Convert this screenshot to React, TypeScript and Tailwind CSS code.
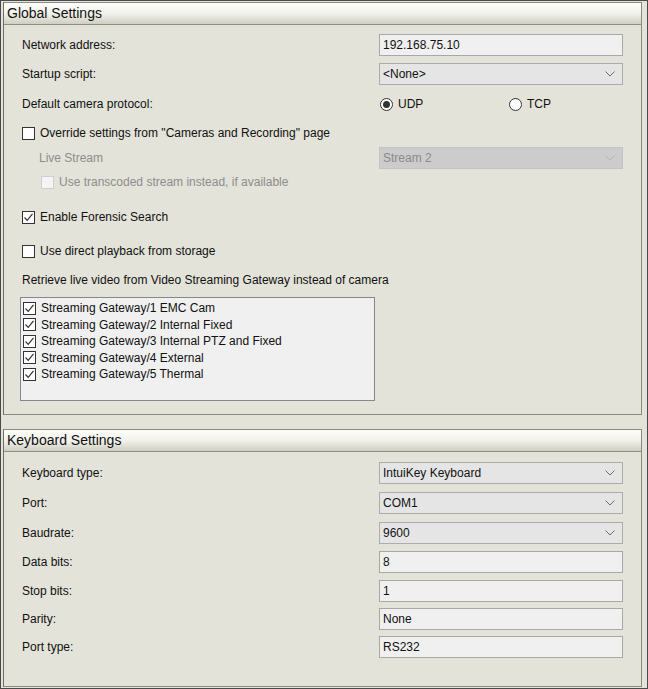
import React from "react";

const font = { fontFamily: '"Liberation Sans", Arial, sans-serif' };

function Chevron({ disabled }: { disabled?: boolean }) {
  return (
    <svg width="10" height="6" viewBox="0 0 10 6" className="shrink-0">
      <path d="M0.5 0.5 L5 5 L9.5 0.5" fill="none" stroke={disabled ? "#b5b5b5" : "#6d6d6d"} strokeWidth="1" />
    </svg>
  );
}

function TextBox({ value, h = "h-[22px]" }: { value: string; h?: string }) {
  return (
    <div className={`w-[244px] ${h} border border-[#a8a8a8] bg-[#f0f0f0] flex items-center pl-[3px] text-[12px] text-[#111]`}>
      {value}
    </div>
  );
}

function Select({ value, disabled }: { value: string; disabled?: boolean }) {
  return (
    <div
      className={`w-[244px] h-[22px] border flex items-center justify-between pl-[3px] pr-[7px] text-[12px] ${
        disabled ? "border-[#c4c4c4] bg-[#cccccc] text-[#8a8a8a]" : "border-[#acacac] bg-[#e5e5e5] text-[#111]"
      }`}
    >
      <span>{value}</span>
      <Chevron disabled={disabled} />
    </div>
  );
}

function Check({ checked, disabled }: { checked?: boolean; disabled?: boolean }) {
  return (
    <div
      className={`w-[13px] h-[13px] shrink-0 border flex items-center justify-center ${
        disabled ? "border-[#d0d0d0] bg-[#f4f4f4]" : "border-[#333333] bg-white"
      }`}
    >
      {checked && (
        <svg width="11" height="11" viewBox="0 0 11 11">
          <path d="M1.5 5.5 L4.2 8.3 L9.5 1.8" fill="none" stroke="#333" strokeWidth="1.2" />
        </svg>
      )}
    </div>
  );
}

function Radio({ checked }: { checked?: boolean }) {
  return (
    <div className="w-[13px] h-[13px] rounded-full border border-[#333] bg-white flex items-center justify-center shrink-0">
      {checked && <div className="w-[7px] h-[7px] rounded-full bg-[#333]" />}
    </div>
  );
}

function Row({ label, children, mt }: { label: React.ReactNode; children?: React.ReactNode; mt: string }) {
  return (
    <div className={`flex items-center h-[22px] ${mt}`}>
      <div className="w-[357px] text-[12px] text-[#111]">{label}</div>
      {children}
    </div>
  );
}

function Header({ title }: { title: string }) {
  return (
    <div className="h-[22px] border-b border-[#8e8e84] bg-gradient-to-b from-[#fdfdfb] via-[#f2f2ec] to-[#cfcec2] flex items-center pl-[3px] text-[14px] text-[#111]">
      {title}
    </div>
  );
}

const gateways = [
  "Streaming Gateway/1 EMC Cam",
  "Streaming Gateway/2 Internal Fixed",
  "Streaming Gateway/3 Internal PTZ and Fixed",
  "Streaming Gateway/4 External",
  "Streaming Gateway/5 Thermal",
];

export default function App() {
  return (
    <div style={font} className="w-[648px] h-[689px] border border-[#4a4a4a] bg-[#e3e3d9] pt-[1px] pl-[2px] overflow-hidden">
      {/* Global Settings */}
      <div className="w-[639px] h-[413px] border border-[#8a8a80] border-l-[#6e6e66]">
        <Header title="Global Settings" />
        <div className="pl-[18px]">
          <Row label="Network address:" mt="mt-[9px]">
            <TextBox value="192.168.75.10" />
          </Row>
          <Row label="Startup script:" mt="mt-[7px]">
            <Select value="<None>" />
          </Row>
          <Row label="Default camera protocol:" mt="mt-[8px]">
            <div className="flex items-center text-[12px] text-[#111]">
              <div className="flex items-center gap-[5px] pl-[1px] w-[130px]">
                <Radio checked />
                <span>UDP</span>
              </div>
              <div className="flex items-center gap-[5px]">
                <Radio />
                <span>TCP</span>
              </div>
            </div>
          </Row>
          <div className="flex items-center h-[22px] mt-[7px] gap-[5px] text-[12px] text-[#111]">
            <Check />
            <span>Override settings from "Cameras and Recording" page</span>
          </div>
          <div className="flex items-center h-[23px] mt-[2px]">
            <div className="w-[357px] pl-[17px] text-[12px] text-[#8d8d8d]">Live Stream</div>
            <Select value="Stream 2" disabled />
          </div>
          <div className="flex items-center h-[22px] mt-[2px] pl-[19px] gap-[5px] text-[12px] text-[#8d8d8d]">
            <Check disabled />
            <span>Use transcoded stream instead, if available</span>
          </div>
          <div className="flex items-center h-[22px] mt-[13px] gap-[5px] text-[12px] text-[#111]">
            <Check checked />
            <span>Enable Forensic Search</span>
          </div>
          <div className="flex items-center h-[22px] mt-[12px] gap-[5px] text-[12px] text-[#111]">
            <Check />
            <span>Use direct playback from storage</span>
          </div>
          <div className="flex items-center h-[22px] mt-[7px] text-[12px] text-[#111]">
            Retrieve live video from Video Streaming Gateway instead of camera
          </div>
          <div className="mt-[6px] ml-[-2px] w-[355px] h-[104px] border border-[#828790] bg-[#f0f0f0] pt-[2px] pl-[2px]">
            {gateways.map((g) => (
              <div key={g} className="flex items-center h-[16.5px] gap-[5px] text-[12px] text-[#111]">
                <Check checked />
                <span>{g}</span>
              </div>
            ))}
          </div>
        </div>
      </div>

      {/* Keyboard Settings */}
      <div className="w-[639px] h-[258px] mt-[14px] border border-[#8a8a80] border-l-[#6e6e66]">
        <Header title="Keyboard Settings" />
        <div className="pl-[18px]">
          <Row label="Keyboard type:" mt="mt-[10px]">
            <Select value="IntuiKey Keyboard" />
          </Row>
          <Row label="Port:" mt="mt-[8px]">
            <Select value="COM1" />
          </Row>
          <Row label="Baudrate:" mt="mt-[8px]">
            <Select value="9600" />
          </Row>
          <Row label="Data bits:" mt="mt-[7px]">
            <TextBox value="8" h="h-[22px]" />
          </Row>
          <Row label="Stop bits:" mt="mt-[7px]">
            <TextBox value="1" h="h-[22px]" />
          </Row>
          <Row label="Parity:" mt="mt-[6px]">
            <TextBox value="None" h="h-[22px]" />
          </Row>
          <Row label="Port type:" mt="mt-[6px]">
            <TextBox value="RS232" h="h-[22px]" />
          </Row>
        </div>
      </div>
    </div>
  );
}
